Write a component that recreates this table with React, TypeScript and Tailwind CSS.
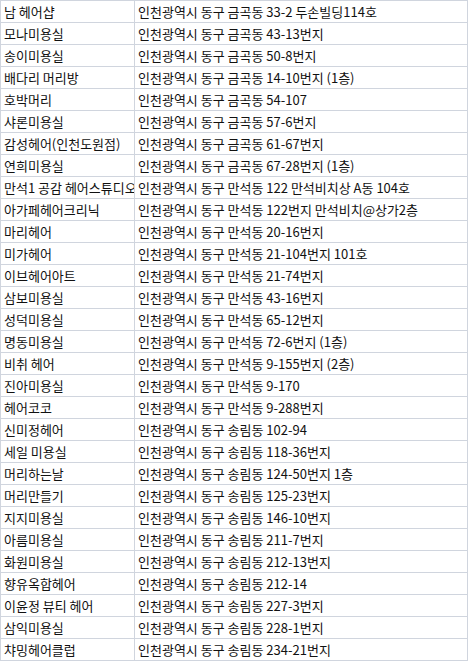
const rows: [string, string][] = [
  ["남 헤어샵", "인천광역시 동구 금곡동 33-2 두손빌딩114호"],
  ["모나미용실", "인천광역시 동구 금곡동 43-13번지"],
  ["송이미용실", "인천광역시 동구 금곡동 50-8번지"],
  ["배다리 머리방", "인천광역시 동구 금곡동 14-10번지 (1층)"],
  ["호박머리", "인천광역시 동구 금곡동 54-107"],
  ["샤론미용실", "인천광역시 동구 금곡동 57-6번지"],
  ["감성헤어(인천도원점)", "인천광역시 동구 금곡동 61-67번지"],
  ["연희미용실", "인천광역시 동구 금곡동 67-28번지 (1층)"],
  ["만석1 공감 헤어스튜디오", "인천광역시 동구 만석동 122 만석비치상 A동 104호"],
  ["아가페헤어크리닉", "인천광역시 동구 만석동 122번지 만석비치@상가2층"],
  ["마리헤어", "인천광역시 동구 만석동 20-16번지"],
  ["미가헤어", "인천광역시 동구 만석동 21-104번지 101호"],
  ["이브헤어아트", "인천광역시 동구 만석동 21-74번지"],
  ["삼보미용실", "인천광역시 동구 만석동 43-16번지"],
  ["성덕미용실", "인천광역시 동구 만석동 65-12번지"],
  ["명동미용실", "인천광역시 동구 만석동 72-6번지 (1층)"],
  ["비취 헤어", "인천광역시 동구 만석동 9-155번지 (2층)"],
  ["진아미용실", "인천광역시 동구 만석동 9-170"],
  ["헤어코코", "인천광역시 동구 만석동 9-288번지"],
  ["신미정헤어", "인천광역시 동구 송림동 102-94"],
  ["세일 미용실", "인천광역시 동구 송림동 118-36번지"],
  ["머리하는날", "인천광역시 동구 송림동 124-50번지 1층"],
  ["머리만들기", "인천광역시 동구 송림동 125-23번지"],
  ["지지미용실", "인천광역시 동구 송림동 146-10번지"],
  ["아름미용실", "인천광역시 동구 송림동 211-7번지"],
  ["화원미용실", "인천광역시 동구 송림동 212-13번지"],
  ["향유옥합헤어", "인천광역시 동구 송림동 212-14"],
  ["이윤정 뷰티 헤어", "인천광역시 동구 송림동 227-3번지"],
  ["삼익미용실", "인천광역시 동구 송림동 228-1번지"],
  ["챠밍헤어클럽", "인천광역시 동구 송림동 234-21번지"],
];

export default function App() {
  return (
    <div className="w-[468px] bg-white text-[13px] text-[#111] font-['Noto_Sans_CJK_KR','Noto_Sans',sans-serif] border-t border-l border-[#d0d5de]">
      {rows.map(([name, addr]) => (
        <div key={name} className="grid grid-cols-[134px_333px] h-[22px]">
          <div className="flex items-center pl-[3px] border-r border-b border-[#d0d5de] overflow-hidden whitespace-nowrap">
            {name}
          </div>
          <div className="flex items-center pl-[3px] border-r border-b border-[#d0d5de] overflow-hidden whitespace-nowrap">
            {addr}
          </div>
        </div>
      ))}
    </div>
  );
}
